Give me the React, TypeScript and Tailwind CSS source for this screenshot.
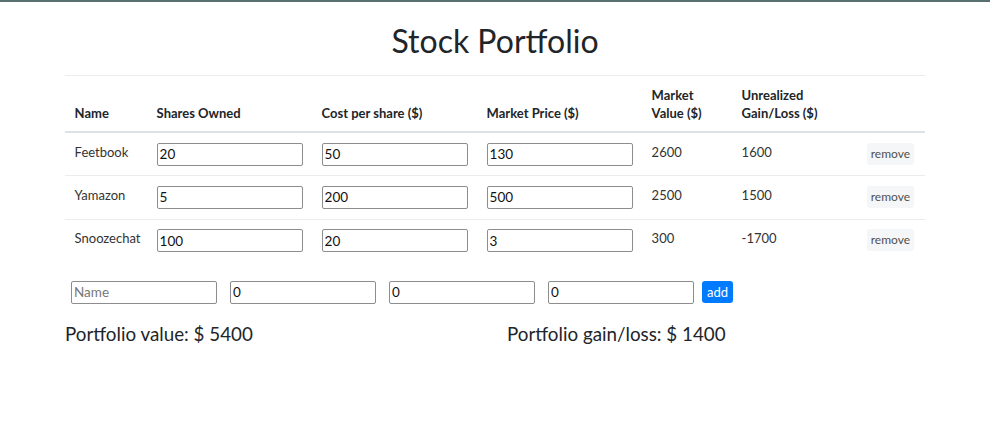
import React, { useState } from "react";

type Stock = { name: string; shares: number; cost: number; price: number };

const initial: Stock[] = [
  { name: "Feetbook", shares: 20, cost: 50, price: 130 },
  { name: "Yamazon", shares: 5, cost: 200, price: 500 },
  { name: "Snoozechat", shares: 100, cost: 20, price: 3 },
];

const inputCls =
  "w-[146px] h-[23px] border border-[#8d8d8d] rounded-[2px] px-[2px] text-[13.5px] text-[#111] bg-white outline-none placeholder:text-[#777]";

export default function App() {
  const [stocks, setStocks] = useState<Stock[]>(initial);

  const update = (i: number, key: keyof Stock, v: string) => {
    setStocks((s) => s.map((st, j) => (j === i ? { ...st, [key]: Number(v) } : st)));
  };

  const value = stocks.reduce((a, s) => a + s.shares * s.price, 0);
  const gain = stocks.reduce((a, s) => a + s.shares * (s.price - s.cost), 0);

  return (
    <div className="min-h-[447px] bg-white border-t-2 border-[#587070] text-[#212529] font-['Lato','Noto_Sans',sans-serif]">
      <div className="w-[860px] mx-auto">
        <h1 className="text-center text-[32px] leading-[38px] font-normal pt-[20px] pb-[15px]">Stock Portfolio</h1>

        <table className="w-full table-fixed border-collapse text-[13px]">
          <colgroup>
            <col className="w-[82px]" />
            <col className="w-[165px]" />
            <col className="w-[165px]" />
            <col className="w-[165px]" />
            <col className="w-[90px]" />
            <col className="w-[124px]" />
            <col />
          </colgroup>
          <thead>
            <tr className="border-t border-[#ececec] border-b-2 border-b-[#dee2e6] text-left align-bottom font-bold leading-[18px]">
              <th className="p-[9.6px]">Name</th>
              <th className="p-[9.6px]">Shares Owned</th>
              <th className="p-[9.6px]">Cost per share ($)</th>
              <th className="p-[9.6px]">Market Price ($)</th>
              <th className="p-[9.6px]">
                Market
                <br />
                Value ($)
              </th>
              <th className="p-[9.6px]">
                Unrealized
                <br />
                Gain/Loss ($)
              </th>
              <th className="p-[9.6px]"></th>
            </tr>
          </thead>
          <tbody>
            {stocks.map((s, i) => (
              <tr key={s.name} className={`align-top leading-[19px] text-[#333] ${i > 0 ? "border-t border-[#ececec]" : ""}`}>
                <td className="p-[9.6px]">{s.name}</td>
                <td className="p-[9.6px]">
                  <input className={inputCls} value={s.shares} onChange={(e) => update(i, "shares", e.target.value)} />
                </td>
                <td className="p-[9.6px]">
                  <input className={inputCls} value={s.cost} onChange={(e) => update(i, "cost", e.target.value)} />
                </td>
                <td className="p-[9.6px]">
                  <input className={inputCls} value={s.price} onChange={(e) => update(i, "price", e.target.value)} />
                </td>
                <td className="p-[9.6px]">{s.shares * s.price}</td>
                <td className="p-[9.6px]">{s.shares * (s.price - s.cost)}</td>
                <td className="py-[9.6px] pr-[11px] text-right">
                  <button
                    onClick={() => setStocks((st) => st.filter((_, j) => j !== i))}
                    className="bg-[#f5f6f7] text-[#505050] text-[12px] leading-[16px] px-[4px] py-[3px] rounded-[3px]"
                  >
                    remove
                  </button>
                </td>
              </tr>
            ))}
          </tbody>
        </table>

        {/* add form */}
        <div className="flex items-center mt-[19px] ml-[6px]">
          <input className={inputCls} placeholder="Name" />
          <input className={`${inputCls} ml-[13px]`} defaultValue="0" />
          <input className={`${inputCls} ml-[13px]`} defaultValue="0" />
          <input className={`${inputCls} ml-[13px]`} defaultValue="0" />
          <button className="ml-[8px] h-[22px] px-[5px] rounded-[3px] bg-[#007bff] text-white text-[13px] leading-[22px]">
            add
          </button>
        </div>

        <div className="grid grid-cols-2 gap-[24px] mt-[18px] text-[18.8px] leading-[24px]">
          <div>Portfolio value: $ {value}</div>
          <div>Portfolio gain/loss: $ {gain}</div>
        </div>
      </div>
    </div>
  );
}
